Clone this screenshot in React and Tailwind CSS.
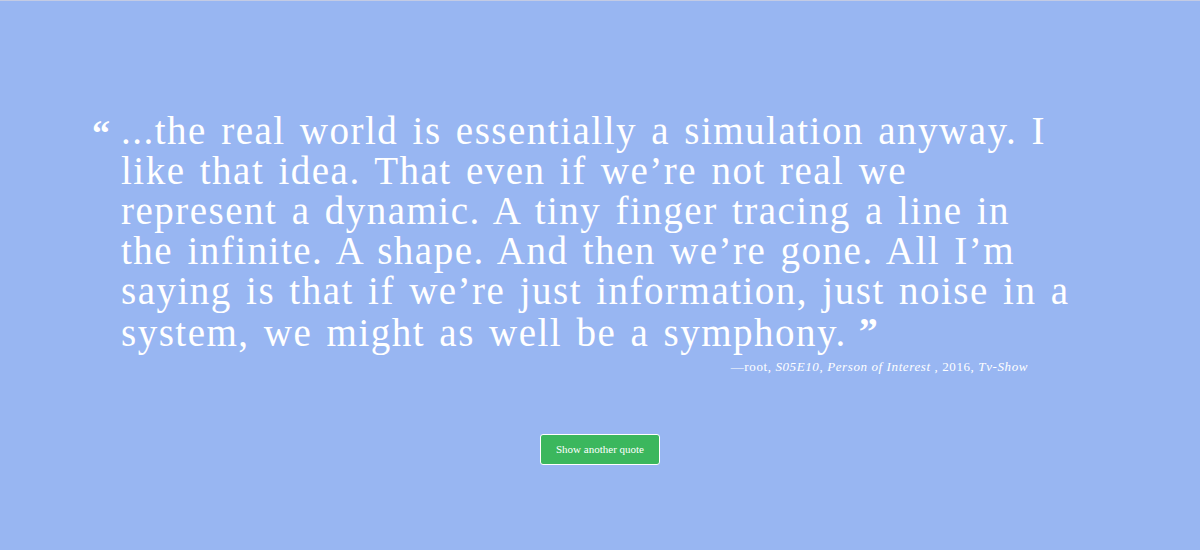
const quoteLines = [
  "...the real world is essentially a simulation anyway. I",
  "like that idea. That even if we’re not real we",
  "represent a dynamic. A tiny finger tracing a line in",
  "the infinite. A shape. And then we’re gone. All I’m",
  "saying is that if we’re just information, just noise in a",
  "system, we might as well be a symphony.",
];

export default function App() {
  return (
    <div className="w-full h-[550px] bg-[#98b6f2] border-t border-[#c3cbe4] text-white font-['Liberation_Serif',serif]">
      <div className="pt-[110px] pl-[92px]">
        <div className="flex items-start">
          <span className="w-[29px] pt-[4px] text-[36px] leading-none font-bold">“</span>
          <blockquote className="text-[39px] leading-[40px] tracking-[1.5px] [word-spacing:3px]">
            {quoteLines.map((line, i) => (
              <div key={i}>
                {line}
                {i === quoteLines.length - 1 && (
                  <span className="ml-[12px] text-[38px] font-bold align-[2px] tracking-normal">”</span>
                )}
              </div>
            ))}
          </blockquote>
        </div>
        <p className="w-[936px] mt-[4px] text-right text-[13px] tracking-[0.6px]">
          —root, <em>S05E10</em>, <em>Person of Interest</em> , 2016, <em>Tv-Show</em>
        </p>
      </div>
      <div className="flex justify-center mt-[57px]">
        <button className="w-[120px] h-[31px] rounded-[3px] border border-white bg-[#3bb75d] text-[11px] text-white">
          Show another quote
        </button>
      </div>
    </div>
  );
}
